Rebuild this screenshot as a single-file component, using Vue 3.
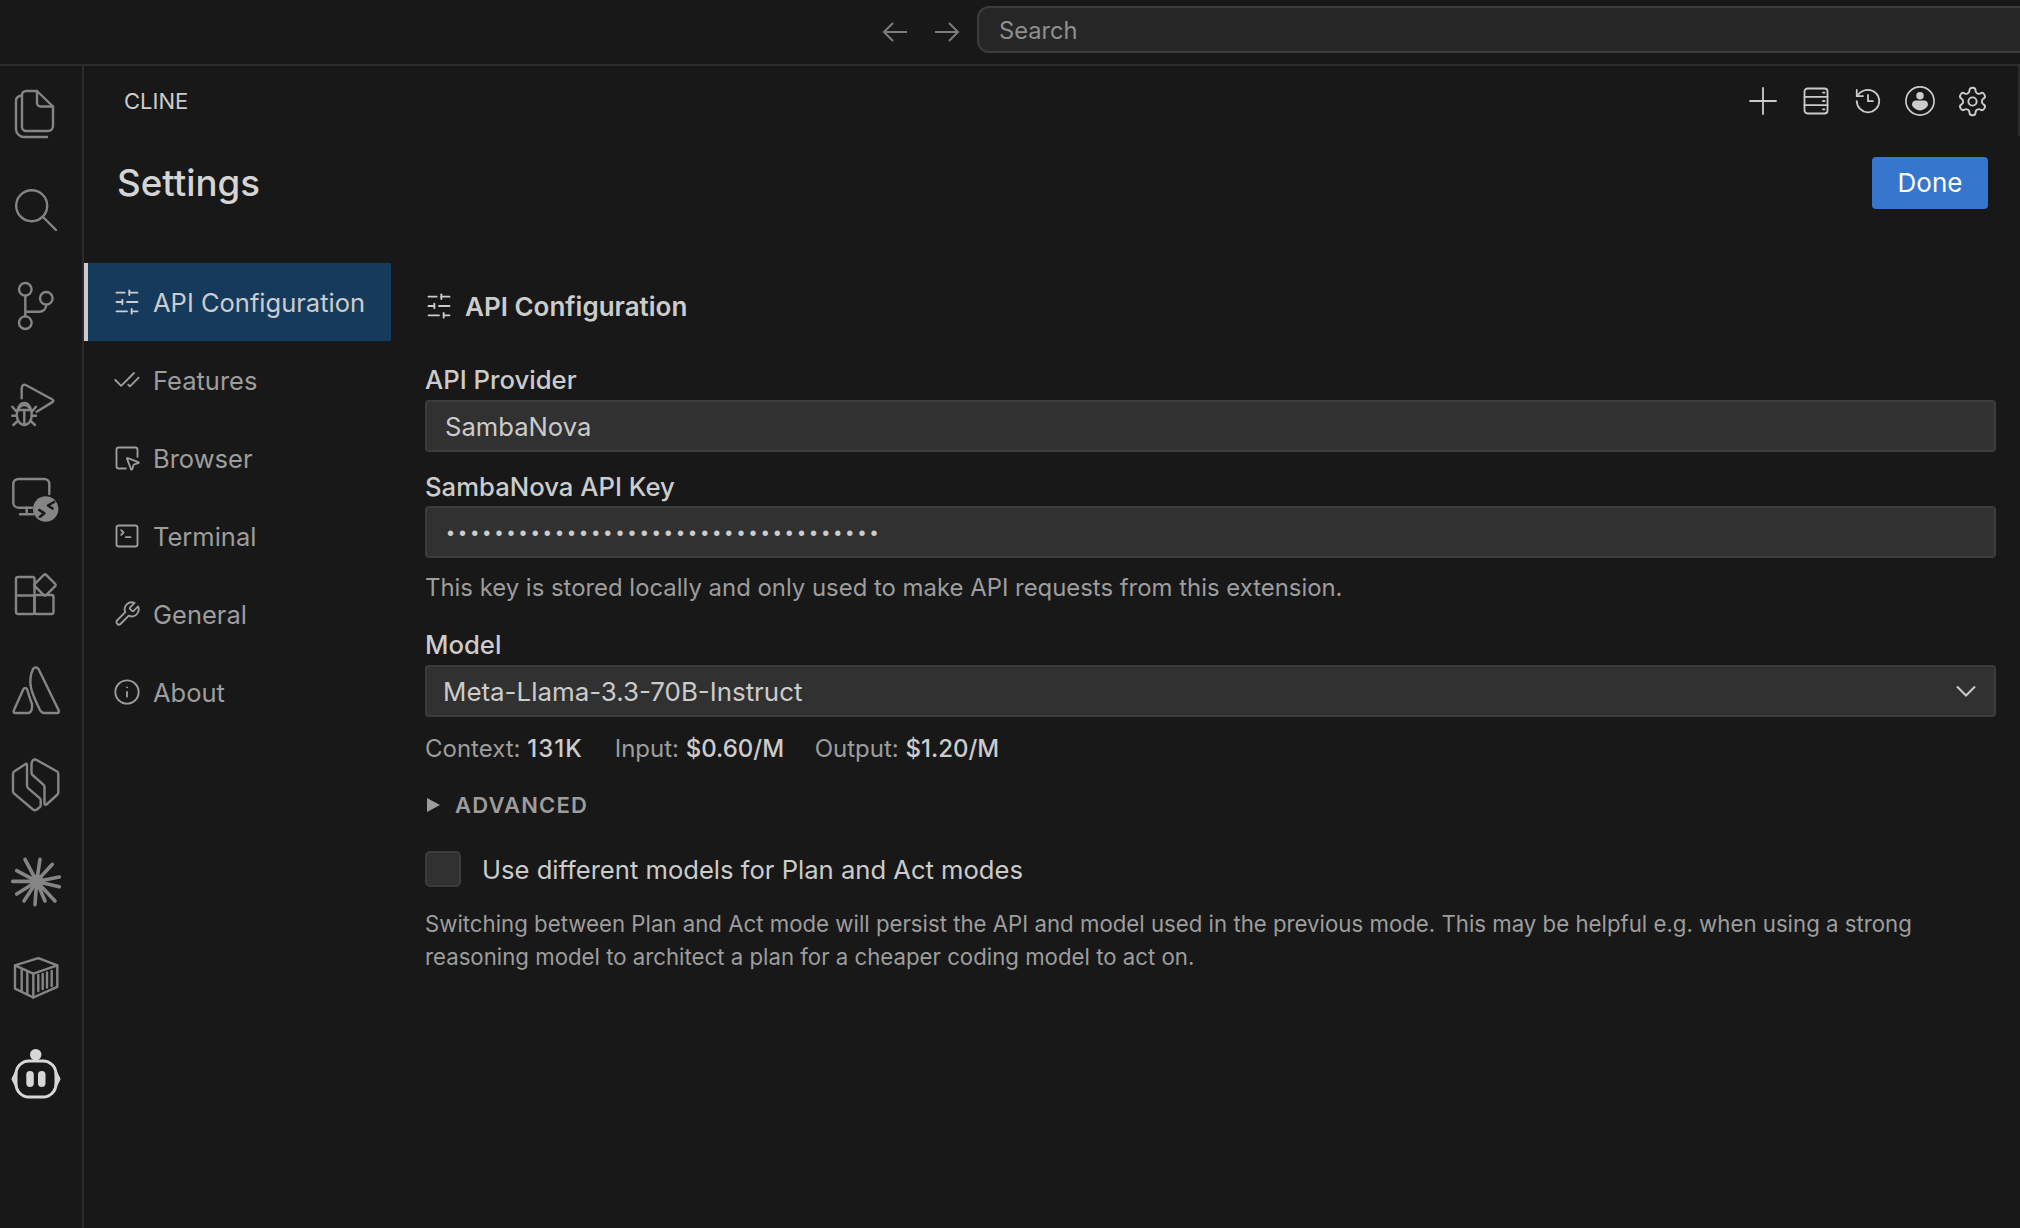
<script setup>
const navItems = [
  { label: 'API Configuration', active: true, paths: ['M21 4h-7', 'M10 4H3', 'M21 12h-9', 'M8 12H3', 'M21 20h-5', 'M12 20H3', 'M14 2v4', 'M8 10v4', 'M16 18v4'] },
  { label: 'Features', paths: ['M18 6 7 17l-5-5', 'm22 10-7.5 7.5L13 16'] },
  { label: 'Browser', paths: ['M12.034 12.681a.498.498 0 0 1 .647-.647l9 3.5a.5.5 0 0 1-.033.943l-3.444 1.068a1 1 0 0 0-.66.66l-1.067 3.443a.5.5 0 0 1-.943.033z', 'M21 11V5a2 2 0 0 0-2-2H5a2 2 0 0 0-2 2v14a2 2 0 0 0 2 2h6'] },
  { label: 'Terminal', paths: ['m7 11 2-2-2-2', 'M11 13h4', 'M5 3h14a2 2 0 0 1 2 2v14a2 2 0 0 1-2 2H5a2 2 0 0 1-2-2V5a2 2 0 0 1 2-2z'] },
  { label: 'General', paths: ['M14.7 6.3a1 1 0 0 0 0 1.4l1.6 1.6a1 1 0 0 0 1.4 0l3.77-3.77a6 6 0 0 1-7.94 7.94l-6.91 6.91a2.12 2.12 0 0 1-3-3l6.91-6.91a6 6 0 0 1 7.94-7.94l-3.76 3.76z'] },
  { label: 'About', paths: ['M12 2a10 10 0 1 0 0 20 10 10 0 0 0 0-20z', 'M12 16v-4', 'M12 8h.01'] }
]

const sliderPaths = navItems[0].paths
const keyDots = '•'.repeat(36)
const rays = [
  [28, 2.3], [40.3, 7.3], [47.3, 20.1], [47.3, 29.8], [43, 44], [33, 44],
  [23, 47.6], [12, 44], [4.7, 37], [0.7, 24.4], [4.7, 13.7], [13, 2.3]
]
</script>

<template>
  <div class="window">
    <header class="titlebar">
      <svg class="nav-arrow" viewBox="0 0 26 24"><path d="M25 12H2M11 3l-9 9 9 9" /></svg>
      <svg class="nav-arrow" viewBox="0 0 26 24"><path d="M1 12h23M15 3l9 9-9 9" /></svg>
      <div class="search">Search</div>
    </header>

    <div class="body">
      <aside class="activity">
        <svg viewBox="0 0 48 48">
          <path d="M14 1h11l16 15.5V36a5 5 0 0 1-5 5H14a4 4 0 0 1-4-4V5a4 4 0 0 1 4-4z" />
          <path d="M25 1v12a3.5 3.5 0 0 0 3.5 3.5H41" />
          <path d="M9.5 5.5C6 6 4 8 4 11v28a8 8 0 0 0 8 8h23" />
        </svg>
        <svg viewBox="0 1 48 48">
          <circle cx="19.7" cy="20.7" r="15.5" />
          <path d="M31 32l13 13" />
        </svg>
        <svg viewBox="0 1 48 48">
          <circle cx="13.3" cy="8.3" r="6.3" />
          <circle cx="13.3" cy="41.7" r="6.3" />
          <circle cx="34.3" cy="17.3" r="6.3" />
          <path d="M13.3 14.6v20.8M34.3 23.6c0 4.4-3.3 7.1-7.3 7.1H13.3" />
        </svg>
        <svg viewBox="0 -1 48 48">
          <path d="M9.7 19.300V9.500c0-3 2-4.500 4.500-3.200l25.800 14c1.800 1 1.800 2.100 0 3.100L24.700 32.700" />
          <ellipse cx="12.300" cy="36" rx="7.500" ry="10" />
          <path d="M6 31a6.300 7 0 0 1 12.600 0M4.700 31h15M12.300 31v15" />
          <path d="M.3 27.700l4.400 5M.3 36.700h4.400M1.300 46l4.400-4M24 27.700l-4.300 5M24 36.700h-4.300M23 46l-4.300-4" />
        </svg>
        <svg viewBox="0 0 48 48">
          <path d="M20 33.700H6.300a5 5 0 0 1-5-5V10a5 5 0 0 1 5-5h26a5 5 0 0 1 5 5v10" />
          <path d="M8 40.300h13.300M14.700 33.700v6.600" />
          <circle class="badge" cx="33.700" cy="35" r="12.700" />
          <path class="badge-mark" d="M42 28l-6 3.500 4.500 3M27.300 36l5 3.300-4.300 3.400" />
        </svg>
        <svg viewBox="0 0 48 48">
          <rect x="4" y="7" width="18.500" height="37" rx="2" />
          <rect x="22.500" y="25" width="19" height="19" rx="2" />
          <path d="M4 25.500h18.500" />
          <rect x="25" y="7" width="16" height="16" rx="2" transform="rotate(45 33 15)" />
        </svg>
        <svg viewBox="0 0 48 48">
          <path d="M21 3c1.500-2 4-2 5.500 0L46.500 44c1 2 0 3-1.500 3H32c-2 0-3-1-4-3-6-13-14-26-7-41z" />
          <path d="M11.500 23c1-1.500 2.500-1.500 3.500 0 1.500 5 3 10 5 15 .5 4-.5 9-4 9H3.500c-1.500 0-2.500-1-1.500-3z" />
        </svg>
        <svg viewBox="0 2 48 48">
          <path d="M15 4.500c0-.8-.7-1-1.400-.6L2.500 11.300A3 3 0 0 0 1 13.800v17.400a3 3 0 0 0 1.200 2.400L21 49.500a3 3 0 0 0 3.500.2l3.200-2.400a2.500 2.500 0 0 0 1-2v-5a3 3 0 0 0-1-2.200L16.300 28.300a4 4 0 0 1-1.300-3z" />
          <path d="M19.500 4.500c0-3.500 2-5.700 4.700-4.800l20.400 11.500a3 3 0 0 1 1.700 2.600v18.700a3 3 0 0 1-1.300 2.500L34.500 44.500c-1 .6-2 .2-2-1V27a3 3 0 0 0-.9-2.200L20.500 15a3 3 0 0 1-1-2.200z" />
        </svg>
        <svg viewBox="0 1 48 48">
          <line v-for="(r, i) in rays" :key="i" class="ray" x1="24.700" y1="24.400" :x2="r[0]" :y2="r[1]" />
          <circle class="hub" cx="24.700" cy="24.400" r="7" />
        </svg>
        <svg viewBox="0 0 48 48">
          <path d="M3 11.400L26.300 4.200l19 7.200v21.400L21.300 43.500 3 34.600z" />
          <path d="M3 11.400l18.300 8.200 24-8.200M21.300 19.600v23.900" />
          <path d="M9.700 16v21M15.300 18v22M26.300 21v16M30.700 20v15M35 18.500v15M39.700 17v15" />
        </svg>
        <svg class="robot" viewBox="0 1 48 48">
          <circle class="robot-fill" cx="23.700" cy="5.600" r="5.700" />
          <rect x="4" y="12" width="40" height="36" rx="13" />
          <path d="M4 24l-3 6 3 6M44 24l3 6-3 6" />
          <rect class="robot-fill" x="14.300" y="22" width="7.500" height="16" rx="3.700" />
          <rect class="robot-fill" x="26" y="22" width="7.500" height="16" rx="3.700" />
        </svg>
      </aside>

      <div class="panel">
        <div class="scroll-mark"></div>
        <div class="panel-head">
          <span class="panel-name">CLINE</span>
          <div class="panel-actions">
            <svg viewBox="1 0 30 30"><path d="M15 2v26M2 15h26" /></svg>
            <svg viewBox="0 0 30 30">
              <rect x="3.500" y="2.500" width="23" height="25" rx="3" />
              <path d="M3.500 10.800h23M3.500 19.200h23M22 6.600h1.500M22 15h1.500M22 23.300h1.500" />
            </svg>
            <svg viewBox="0 0 24 24" class="thin">
              <path d="M3 12a9 9 0 1 0 9-9 9.750 9.750 0 0 0-6.740 2.740L3 8" />
              <path d="M3 3v5h5M12 7v5h4" />
            </svg>
            <svg viewBox="0 0 32 32">
              <circle cx="16" cy="16" r="15" />
              <circle class="fill" cx="16" cy="10.500" r="4" />
              <path class="fill" d="M7.500 20c0-3 2-4.500 4-4.500h9c2 0 4 1.500 4 4.500 0 2-4 6-8.500 6s-8.500-4-8.500-6z" />
            </svg>
            <svg viewBox="0 0 24 24" class="gear">
              <path d="M12.220 2h-.44a2 2 0 0 0-2 2v.18a2 2 0 0 1-1 1.730l-.43.250a2 2 0 0 1-2 0l-.15-.08a2 2 0 0 0-2.730.730l-.22.380a2 2 0 0 0 .730 2.730l.15.100a2 2 0 0 1 1 1.720v.510a2 2 0 0 1-1 1.740l-.15.090a2 2 0 0 0-.730 2.730l.22.380a2 2 0 0 0 2.730.730l.15-.08a2 2 0 0 1 2 0l.43.250a2 2 0 0 1 1 1.730V20a2 2 0 0 0 2 2h.44a2 2 0 0 0 2-2v-.18a2 2 0 0 1 1-1.730l.43-.25a2 2 0 0 1 2 0l.15.08a2 2 0 0 0 2.730-.730l.22-.39a2 2 0 0 0-.730-2.730l-.15-.08a2 2 0 0 1-1-1.740v-.5a2 2 0 0 1 1-1.740l.15-.09a2 2 0 0 0 .730-2.730l-.22-.38a2 2 0 0 0-2.730-.730l-.15.08a2 2 0 0 1-2 0l-.43-.25a2 2 0 0 1-1-1.730V4a2 2 0 0 0-2-2z" />
              <circle cx="12" cy="12" r="3" />
            </svg>
          </div>
        </div>

        <div class="settings-head">
          <h1>Settings</h1>
          <button class="done">Done</button>
        </div>

        <div class="settings-body">
          <nav class="side-nav">
            <div v-for="item in navItems" :key="item.label" class="nav-item" :class="{ active: item.active }">
              <svg class="lucide" viewBox="0 0 24 24"><path v-for="d in item.paths" :key="d" :d="d" /></svg>
              <span>{{ item.label }}</span>
            </div>
          </nav>

          <main class="content">
            <div class="section-title">
              <svg class="lucide" viewBox="0 0 24 24"><path v-for="d in sliderPaths" :key="d" :d="d" /></svg>
              <span>API Configuration</span>
            </div>

            <label class="field-label first">API Provider</label>
            <div class="field provider">SambaNova</div>

            <label class="field-label second">SambaNova API Key</label>
            <div class="field key"><span class="dots">{{ keyDots }}</span></div>
            <p class="help">This key is stored locally and only used to make API requests from this extension.</p>

            <label class="field-label model">Model</label>
            <div class="field select">
              <span>Meta-Llama-3.3-70B-Instruct</span>
              <svg viewBox="0 0 20 12"><path d="M1 1.500l9 9 9-9" /></svg>
            </div>

            <div class="stats">
              <span class="stat-context">Context: <b>131K</b></span>
              <span class="stat-input">Input: <b>$0.60/M</b></span>
              <span>Output: <b>$1.20/M</b></span>
            </div>

            <div class="advanced"><i class="caret"></i>ADVANCED</div>

            <div class="check-row">
              <span class="checkbox"></span>
              <span>Use different models for Plan and Act modes</span>
            </div>

            <p class="note">Switching between Plan and Act mode will persist the API and model used in the previous mode. This may be helpful e.g. when using a strong reasoning model to architect a plan for a cheaper coding model to act on.</p>
          </main>
        </div>
      </div>
    </div>
  </div>
</template>

<style>
html, body {
  background: #181818;
}
</style>

<style scoped>
.window {
  width: 2020px;
  height: 1228px;
  overflow: hidden;
  background: #181818;
  color: #cccccc;
  font-family: Inter, "Noto Sans", sans-serif;
  display: flex;
  flex-direction: column;
}

.titlebar {
  height: 64px;
  flex: none;
  box-sizing: content-box;
  border-bottom: 2px solid #2b2b2b;
  display: flex;
  align-items: center;
  padding-left: 882px;
  overflow: hidden;
}

.nav-arrow {
  flex: none;
  width: 26px;
  height: 24px;
  margin-right: 26px;
  fill: none;
  stroke: #7c7c7c;
  stroke-width: 2;
}

.nav-arrow + .nav-arrow {
  margin-right: 17px;
}

.search {
  flex: none;
  width: 1100px;
  height: 47px;
  box-sizing: border-box;
  margin-top: -5px;
  padding-left: 20px;
  line-height: 45px;
  border: 2px solid #3c3c3c;
  border-radius: 12px;
  background: #262626;
  color: #8f8f8f;
  font-size: 23.700px;
}

.body {
  flex: 1;
  display: flex;
  min-height: 0;
}

.activity {
  width: 70px;
  flex: none;
  border-right: 2px solid #2b2b2b;
  padding: 24px 0 0 12px;
  display: flex;
  flex-direction: column;
  gap: 48px;
}

.activity svg {
  width: 48px;
  height: 48px;
  flex: none;
  overflow: visible;
  fill: none;
  stroke: #858585;
  stroke-width: 2.4;
  stroke-linejoin: round;
  stroke-linecap: round;
}

.activity .badge {
  fill: #858585;
  stroke: none;
}

.activity .badge-mark {
  stroke: #181818;
  stroke-width: 2.6;
}

.activity .ray {
  stroke-width: 3.6;
}

.activity .hub {
  fill: #858585;
  stroke: none;
}

.activity .robot {
  stroke: #d7d7d7;
  stroke-width: 3;
}

.activity .robot-fill {
  fill: #d7d7d7;
  stroke: none;
}

.panel {
  flex: 1;
  min-width: 0;
  position: relative;
  display: flex;
  flex-direction: column;
}

.scroll-mark {
  position: absolute;
  top: 0;
  right: 0;
  width: 2px;
  height: 70px;
  background: #2b2b2b;
}

.panel-head {
  height: 70px;
  flex: none;
  display: flex;
  align-items: center;
  justify-content: space-between;
  padding: 0 22px 0 40px;
}

.panel-name {
  font-size: 22px;
  color: #cccccc;
}

.panel-actions {
  display: flex;
  align-items: center;
}

.panel-actions svg {
  width: 30px;
  height: 30px;
  margin: 0 11px;
  fill: none;
  stroke: #cccccc;
  stroke-width: 1.8;
  stroke-linecap: round;
}

.panel-actions svg.thin {
  stroke-width: 1.4;
}

.panel-actions svg.gear {
  width: 33px;
  height: 33px;
  margin: 0 9.5px;
  stroke-width: 1.4;
}

.panel-actions .fill {
  fill: #cccccc;
  stroke: none;
}

.settings-head {
  flex: none;
  display: flex;
  align-items: center;
  justify-content: space-between;
  padding: 21px 32px 54px 33px;
}

.settings-head h1 {
  margin: -2px 0 0;
  font-size: 36.700px;
  font-weight: 500;
  color: #d4d4d4;
}

.done {
  width: 116px;
  height: 52px;
  padding: 0 0 2px;
  border: none;
  border-radius: 4px;
  background: #3676cc;
  color: #ffffff;
  font-family: inherit;
  font-size: 26px;
}

.settings-body {
  flex: 1;
  display: flex;
  min-height: 0;
}

.side-nav {
  width: 307px;
  flex: none;
}

.nav-item {
  height: 78px;
  display: flex;
  align-items: center;
  gap: 12px;
  padding-left: 29px;
  color: #9d9d9d;
  font-size: 25.500px;
}

.nav-item.active {
  background: #163a5c;
  color: #cccccc;
  border-left: 4px solid #cccccc;
  padding-left: 25px;
}

.lucide {
  width: 28px;
  height: 28px;
  flex: none;
  fill: none;
  stroke: currentColor;
  stroke-width: 1.6;
  stroke-linecap: round;
  stroke-linejoin: round;
}

.content {
  flex: 1;
  min-width: 0;
  padding: 26px 24px 0 34px;
}

.section-title {
  display: flex;
  align-items: center;
  gap: 12px;
  height: 34px;
  font-size: 26px;
  font-weight: 600;
  color: #cccccc;
}

.field-label {
  display: block;
  height: 30px;
  line-height: 30px;
  font-size: 25.700px;
  font-weight: 500;
  color: #cccccc;
}

.field-label.first {
  margin-top: 42px;
  margin-bottom: 5px;
}

.field-label.second {
  margin-top: 20px;
  margin-bottom: 4px;
}

.field-label.model {
  margin-top: 25px;
  margin-bottom: 5px;
}

.field {
  height: 52px;
  box-sizing: border-box;
  display: flex;
  align-items: center;
  background: #313131;
  border: 2px solid #3c3c3c;
  border-radius: 4px;
  font-size: 25.600px;
  color: #cccccc;
}

.provider {
  padding-left: 18px;
}

.key {
  padding-left: 20px;
}

.dots {
  padding-top: 2px;
  font-family: "Liberation Sans", sans-serif;
  font-size: 20px;
  letter-spacing: 5.100px;
}

.select {
  justify-content: space-between;
  padding: 0 18px 0 16px;
  font-size: 25.900px;
}

.select svg {
  width: 20px;
  height: 12px;
  fill: none;
  stroke: #cccccc;
  stroke-width: 2;
}

.help {
  margin: 13px 0 0;
  height: 34px;
  line-height: 34px;
  font-size: 23.900px;
  color: #9d9d9d;
}

.stats {
  display: flex;
  gap: 32px;
  height: 30px;
  line-height: 30px;
  margin-top: 17px;
  font-size: 24px;
  color: #9d9d9d;
}

.stats b {
  font-weight: 500;
  color: #cccccc;
}

.stat-context b {
  letter-spacing: 1px;
}

.stat-input {
  margin-right: -1.500px;
}

.advanced {
  display: flex;
  align-items: center;
  height: 32px;
  margin-top: 25px;
  font-size: 22px;
  font-weight: 600;
  letter-spacing: 1.200px;
  color: #9d9d9d;
}

.caret {
  width: 0;
  height: 0;
  margin: 0 15px 0 2px;
  border-left: 13px solid #9d9d9d;
  border-top: 7px solid transparent;
  border-bottom: 7px solid transparent;
}

.check-row {
  display: flex;
  align-items: center;
  gap: 21px;
  margin-top: 30px;
  font-size: 25.600px;
  color: #cccccc;
}

.checkbox {
  width: 36px;
  height: 36px;
  box-sizing: border-box;
  background: #313131;
  border: 2px solid #3c3c3c;
  border-radius: 5px;
}

.note {
  margin: 20px 0 0;
  line-height: 33px;
  font-size: 22.230px;
  color: #9d9d9d;
}
</style>
